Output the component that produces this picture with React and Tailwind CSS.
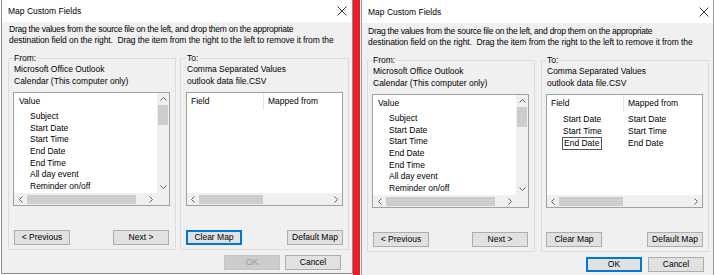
import React from "react";

function Up() {
  return (
    <svg width="7" height="4" viewBox="0 0 7 4">
      <polyline points="0.5,3.5 3.5,0.5 6.5,3.5" fill="none" stroke="#606060" strokeWidth="1" />
    </svg>
  );
}
function Down() {
  return (
    <svg width="7" height="4" viewBox="0 0 7 4">
      <polyline points="0.5,0.5 3.5,3.5 6.5,0.5" fill="none" stroke="#606060" strokeWidth="1" />
    </svg>
  );
}
function Left() {
  return (
    <svg width="4" height="7" viewBox="0 0 4 7">
      <polyline points="3.5,0.5 0.5,3.5 3.5,6.5" fill="none" stroke="#606060" strokeWidth="1" />
    </svg>
  );
}
function Right() {
  return (
    <svg width="4" height="7" viewBox="0 0 4 7">
      <polyline points="0.5,0.5 3.5,3.5 0.5,6.5" fill="none" stroke="#606060" strokeWidth="1" />
    </svg>
  );
}
function CloseX() {
  return (
    <svg width="10" height="10" viewBox="0 0 10 10">
      <line x1="0.5" y1="0.5" x2="9.5" y2="9.5" stroke="#222" strokeWidth="0.9" />
      <line x1="9.5" y1="0.5" x2="0.5" y2="9.5" stroke="#222" strokeWidth="0.9" />
    </svg>
  );
}

function Btn({ children, focus, disabled }) {
  const base =
    "w-[56px] h-[15px] flex items-center justify-center text-[8.5px] leading-none border";
  const cls = disabled
    ? "bg-[#cccccc] border-[#c4c4c4] text-[#9a9a9a]"
    : focus
    ? "bg-[#e1e1e1] border-[#0078d7] shadow-[inset_0_0_0_1px_#0078d7] text-black"
    : "bg-[#e1e1e1] border-[#adadad] text-black";
  return <div className={`${base} ${cls}`}>{children}</div>;
}

const FROM_ITEMS = [
  "Subject",
  "Start Date",
  "Start Time",
  "End Date",
  "End Time",
  "All day event",
  "Reminder on/off",
];

function FromList() {
  return (
    <div className="w-[157px] h-[114px] border border-[#a0a0a0] bg-white flex flex-col">
      <div className="flex h-[100px]">
        <div className="flex-1 flex flex-col overflow-hidden">
          <div className="h-[17px] flex items-center pl-[5px]">Value</div>
          <div className="pl-[16px] pt-[1px] leading-[11.67px]">
            {FROM_ITEMS.map((i) => (
              <div key={i} className="whitespace-nowrap">
                {i}
              </div>
            ))}
          </div>
        </div>
        <div className="w-[12px] bg-[#f0f0f0] flex flex-col items-center">
          <div className="h-[12px] flex items-center justify-center">
            <Up />
          </div>
          <div className="w-[10px] h-[20px] bg-[#cdcdcd]" />
          <div className="flex-1" />
          <div className="h-[12px] flex items-center justify-center">
            <Down />
          </div>
        </div>
      </div>
      <div className="h-[12px] flex">
        <div className="flex-1 bg-[#f0f0f0] flex items-center">
          <div className="w-[13px] flex justify-center">
            <Left />
          </div>
          <div className="w-[109px] h-[9px] bg-[#cdcdcd]" />
          <div className="flex-1" />
          <div className="w-[12px] flex justify-center">
            <Right />
          </div>
        </div>
        <div className="w-[12px] bg-[#f0f0f0]" />
      </div>
    </div>
  );
}

function ToList({ rows }) {
  return (
    <div className="w-[157px] h-[114px] border border-[#a0a0a0] bg-white flex flex-col">
      <div className="h-[100px] flex flex-col overflow-hidden">
        <div className="h-[17px] flex">
          <div className="w-[76px] pl-[4px] flex items-center">Field</div>
          <div className="w-px bg-[#e5e5e5]" />
          <div className="pl-[4px] flex items-center whitespace-nowrap">Mapped from</div>
        </div>
        <div className="pt-[1px]">
          {rows.map(([a, b, box]) => (
            <div key={a} className="flex h-[12px] items-center whitespace-nowrap">
              <div className="w-[77px] pl-[16px]">
                {box ? (
                  <span className="-ml-px pl-px pr-[2px] border border-[#555] leading-[11px] inline-block">
                    {a}
                  </span>
                ) : (
                  a
                )}
              </div>
              <div className="pl-[4px]">{b}</div>
            </div>
          ))}
        </div>
      </div>
      <div className="h-[12px] bg-[#f0f0f0] flex items-center">
        <div className="w-[12px] flex justify-center">
          <Left />
        </div>
        <div className="w-[64px] h-[9px] bg-[#cdcdcd]" />
        <div className="flex-1" />
        <div className="w-[12px] flex justify-center">
          <Right />
        </div>
      </div>
    </div>
  );
}

function Dialog({ right }) {
  const rows = right
    ? [
        ["Start Date", "Start Date"],
        ["Start Time", "Start Time"],
        ["End Date", "End Date", true],
      ]
    : [];
  return (
    <div
      className={
        right
          ? "w-[354px] h-[275px] bg-white pl-px flex flex-col"
          : "w-[353px] h-[275px] bg-white pl-px pb-px flex flex-col"
      }
    >
      <div
        className={
          right
            ? "flex-1 border-l border-r border-[#9a9a9a] flex flex-col"
            : "flex-1 border-l border-r border-b border-[#8c8c8c] flex flex-col"
        }
      >
        <div
          className={
            right
              ? "h-[23px] bg-white flex items-center justify-between pl-[6px] pr-[4px] pt-px"
              : "h-[22px] bg-white flex items-center justify-between pl-[6px] pr-[5px]"
          }
        >
          <div className="text-[8.5px] leading-none whitespace-nowrap">Map Custom Fields</div>
          <CloseX />
        </div>
        <div
          className={
            right
              ? "flex-1 bg-[#f0f0f0] pl-[5px] pt-[3px] flex flex-col"
              : "flex-1 bg-[#f0f0f0] pl-[6px] pt-[2px] flex flex-col"
          }
        >
          <div className="ml-px leading-[11px] whitespace-nowrap overflow-hidden">
            <div className="tracking-[-0.25px]">
              Drag the values from the source file on the left, and drop them on the appropriate
            </div>
            <div className="tracking-[-0.08px]">
              destination field on the right.&nbsp; Drag the item from the right to the left to remove it from the
            </div>
          </div>
          <div className={right ? "flex gap-[6px] mt-[7px]" : "flex gap-[4px] mt-[7px]"}>
            <fieldset className="w-[168px] border border-[#dcdcdc] pl-[4px] pr-[4px] pb-[4px]">
              <legend className="px-px leading-[10px]">From:</legend>
              <div className="pl-px leading-[12px] whitespace-nowrap">
                <div>Microsoft Office Outlook</div>
                <div>Calendar (This computer only)</div>
              </div>
              <div className="mt-[5px]">
                <FromList />
              </div>
              <div className="mt-[24px] w-[157px] px-px flex justify-between">
                <Btn>&lt; Previous</Btn>
                <Btn>Next &gt;</Btn>
              </div>
            </fieldset>
            <fieldset
              className={
                right
                  ? "w-[168px] border border-[#dcdcdc] pl-[4px] pr-[4px] pb-[4px]"
                  : "w-[169px] border border-[#dcdcdc] pl-[5px] pr-[4px] pb-[4px]"
              }
            >
              <legend className="px-px leading-[10px]">To:</legend>
              <div className="pl-px leading-[12px] whitespace-nowrap">
                <div>Comma Separated Values</div>
                <div>outlook data file.CSV</div>
              </div>
              <div className="mt-[5px]">
                <ToList rows={rows} />
              </div>
              <div className="mt-[24px] w-[157px] flex justify-between">
                <Btn focus={!right}>Clear Map</Btn>
                <Btn>Default Map</Btn>
              </div>
            </fieldset>
          </div>
          <div
            className={
              right
                ? "mt-[5px] flex justify-end gap-[6px] pr-[9px]"
                : "mt-[5px] flex justify-end gap-[5px] pr-[11px]"
            }
          >
            <Btn disabled={!right} focus={right}>
              OK
            </Btn>
            <Btn>Cancel</Btn>
          </div>
        </div>
      </div>
    </div>
  );
}

export default function App() {
  return (
    <div className="w-[714px] h-[275px] flex bg-white text-black text-[8.5px] font-['Liberation_Sans',Arial,sans-serif] overflow-hidden">
      <Dialog />
      <div className="w-[7px] h-full bg-[#ec1c24]" />
      <Dialog right />
    </div>
  );
}
